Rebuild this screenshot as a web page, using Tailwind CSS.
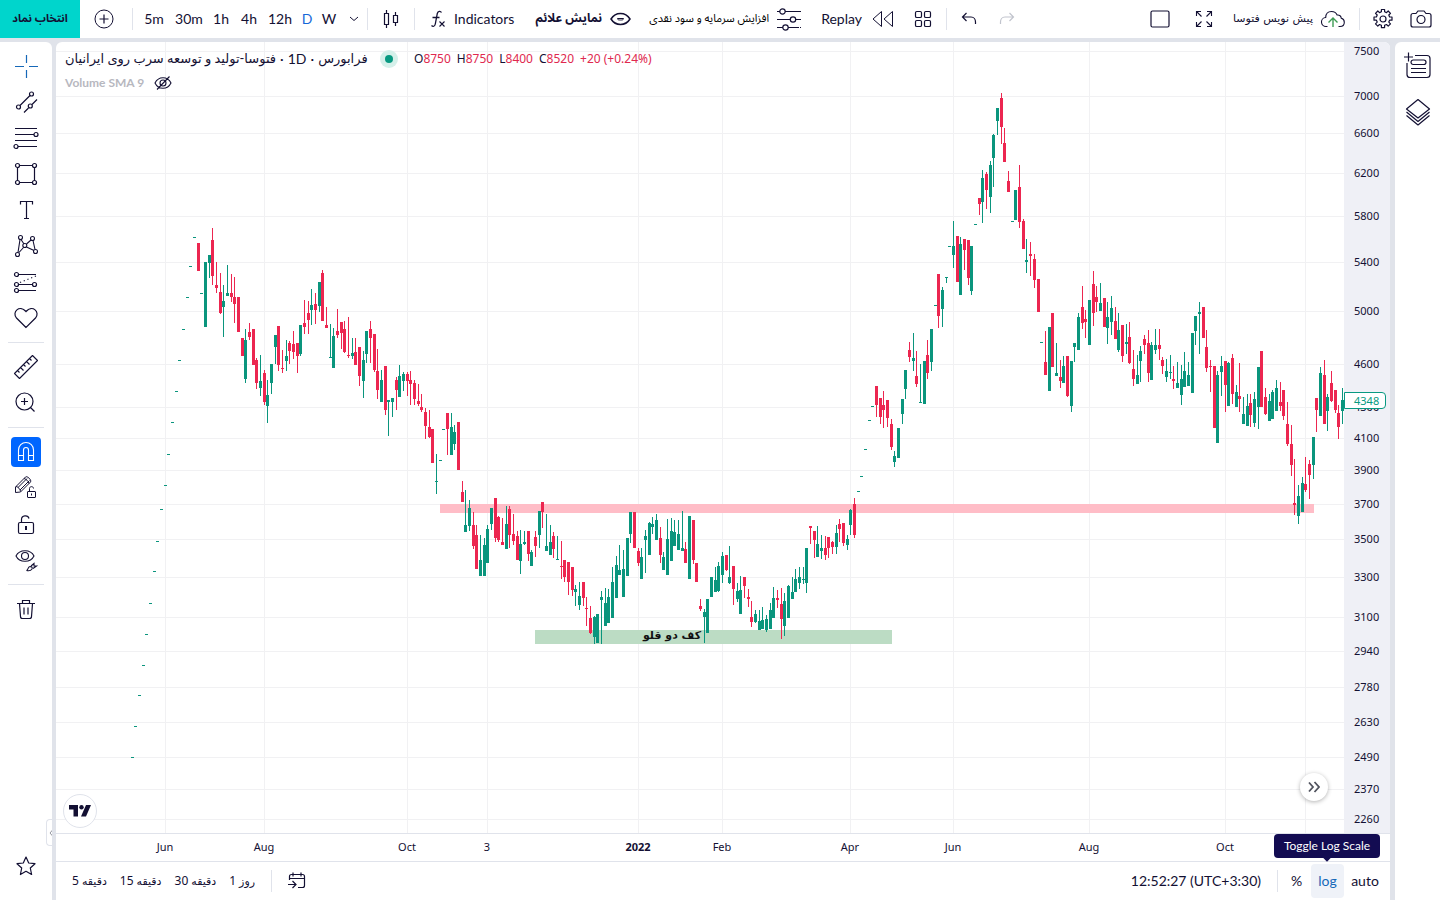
<!DOCTYPE html>
<html lang="en">
<head>
<meta charset="utf-8">
<meta name="viewport" content="width=device-width, initial-scale=1">
<title>Chart</title>
<script src="https://cdn.jsdelivr.net/npm/@tailwindcss/browser@4"></script>
</head>
<body class="h-screen min-h-[600px] overflow-hidden bg-[#e0e3ea] flex flex-col gap-1 text-[#131033] text-sm font-['Lato','DejaVu_Sans',sans-serif]">

<header class="h-[38px] shrink-0 bg-white flex items-center">
  <button class="w-20 h-full shrink-0 bg-[#00d5cc] text-[11px] font-bold font-['Noto_Sans_Arabic','DejaVu_Sans',sans-serif]" dir="rtl">انتخاب نماد</button>
  <button aria-label="Compare" class="w-[52px] shrink-0 flex justify-center pr-1"><svg width="20" height="20" viewBox="0 0 20 20" fill="none" stroke="currentColor"><circle cx="10" cy="10" r="9"/><path d="M5.500 10h9M10 5.500v9" stroke-width="1.200"/></svg></button>
  <div class="w-px h-[22px] bg-[#e0e3eb] shrink-0"></div>
  <nav class="flex shrink-0 items-center pl-1">
    <button class="w-[34px]">5m</button>
    <button class="w-9">30m</button>
    <button class="w-7">1h</button>
    <button class="w-7">4h</button>
    <button class="w-[34px]">12h</button>
    <button class="w-5 text-[#1668d8]">D</button>
    <button class="w-6">W</button>
    <button aria-label="More intervals" class="w-[26px] flex justify-center"><svg width="10" height="6" viewBox="0 0 10 6" fill="none" stroke="currentColor"><path d="M1 1l4 3.500L9 1"/></svg></button>
  </nav>
  <div class="w-px h-[22px] bg-[#e0e3eb] shrink-0"></div>
  <button aria-label="Chart type" class="w-[46px] shrink-0 flex justify-center"><svg width="16" height="20" viewBox="0 0 16 20" fill="none" stroke="currentColor" stroke-width="1.200"><path d="M1.500 4.500h4v11h-4zM3.500 1v3.500M3.500 15.500V19M10.500 6.500h4v7h-4zM12.500 3v3.500M12.500 13.500V17"/></svg></button>
  <div class="w-px h-[22px] bg-[#e0e3eb] shrink-0"></div>
  <button class="w-[108px] shrink-0 flex items-center gap-2 pl-4"><svg width="15" height="18" viewBox="0 0 15 18" fill="none" stroke="currentColor"><path d="M10.500 2.500C9.500.800 7 .800 6.300 3.500L4.300 14c-.500 2.500-2.300 3-3.800 1.500M1.500 7.500h7" stroke-width="1.300"/><path d="M8.500 11.500l5 5M13.500 11.500l-5 5" stroke-width="1.100"/></svg>Indicators</button>
  <button class="w-[108px] shrink-0 flex items-center justify-end gap-2 whitespace-nowrap"><span class="text-xs font-bold font-['Noto_Sans_Arabic','DejaVu_Sans',sans-serif]" dir="rtl">نمایش علائم</span><svg width="21" height="14" viewBox="0 0 21 14" fill="none" stroke="currentColor" stroke-width="1.500"><path d="M1 7c2.500-4 6-5.500 9.500-5.500S17.500 3 20 7c-2.500 4-6 5.500-9.500 5.500S3.500 11 1 7z"/><path d="M7.500 6.500h6c0 1.500-1.500 1.500-3 1.500s-3 0-3-1.500z" stroke-width="1"/></svg></button>
  <button class="w-[170px] shrink-0 flex items-center justify-end gap-2 whitespace-nowrap"><span class="text-[11px] font-['Noto_Sans_Arabic','DejaVu_Sans',sans-serif] text-black" dir="rtl">افزایش سرمایه و سود نقدی</span><svg width="24" height="24" viewBox="0 0 24 24" fill="none" stroke="currentColor" stroke-width="1.200"><path d="M0 4.500h3M8 4.500h16M0 12.500h13M18 12.500h6M0 20.500h6M11 20.500h11M23 20.500h1"/><circle cx="5.500" cy="4.500" r="2.700"/><circle cx="16" cy="12.500" r="2.700"/><circle cx="8.500" cy="20.500" r="2.700"/></svg></button>
  <button class="w-[93px] shrink-0 flex items-center justify-end gap-2.5">Replay<svg width="22" height="18" viewBox="0 0 22 18" fill="none" stroke="currentColor"><path d="M9.500 1.500v15L1 9zM20.500 1.500v15L12 9z"/></svg></button>
  <button aria-label="Layouts" class="w-[52px] pl-1.5 shrink-0 flex justify-center"><svg width="18" height="18" viewBox="0 0 18 18" fill="none" stroke="currentColor" stroke-width="1.200"><rect x="1.500" y="1.500" width="6" height="6" rx="1.300"/><rect x="10.500" y="1.500" width="6" height="6" rx="1.300"/><rect x="1.500" y="10.500" width="6" height="6" rx="1.300"/><rect x="10.500" y="10.500" width="6" height="6" rx="1.300"/></svg></button>
  <div class="w-px h-[22px] bg-[#e0e3eb] shrink-0"></div>
  <button aria-label="Undo" class="w-11 shrink-0 flex justify-center"><svg width="16" height="14" viewBox="0 0 16 14" fill="none" stroke="currentColor" stroke-width="1.200"><path d="M5.500 1l-4 4 4 4M1.500 5H10c3 0 4.500 2.500 4.500 5v2"/></svg></button>
  <button aria-label="Redo" disabled class="w-8 shrink-0 flex justify-center text-[#c1c4cd]"><svg width="16" height="14" viewBox="0 0 16 14" fill="none" stroke="currentColor" stroke-width="1.200"><path d="M10.500 1l4 4-4 4M14.500 5H6C3 5 1.500 7.500 1.500 10v2"/></svg></button>
  <div class="grow"></div>
  <button aria-label="Layout" class="w-11 shrink-0 flex justify-center"><svg width="20" height="18" viewBox="0 0 20 18" fill="none" stroke="currentColor" stroke-width="1.200"><rect x="1" y="1" width="18" height="16" rx="1.500"/></svg></button>
  <button aria-label="Fullscreen" class="w-11 shrink-0 flex justify-center"><svg width="18" height="18" viewBox="0 0 18 18" fill="none" stroke="currentColor" stroke-width="1.100"><path d="M1.500 6V1.500H6M1.500 1.500l5 5M12 1.500h4.500V6M16.500 1.500l-5 5M1.500 12v4.500H6M1.500 16.500l5-5M12 16.500h4.500V12M16.500 16.500l-5-5"/></svg></button>
  <button class="w-[119px] shrink-0 flex items-center justify-end gap-2 whitespace-nowrap"><span class="text-[11px] font-['DejaVu_Sans',sans-serif]" dir="rtl">پیش نویس فتوسا</span><svg width="24" height="18" viewBox="0 0 24 18" fill="none" stroke="currentColor"><path d="M6.500 16.500H5.300a4.500 4.500 0 0 1-.600-9C4.800 4 7 1.500 10.500 1.500c3 0 4.800 1.500 5.600 3.500 2.500-.300 4 1.200 4.200 3.200 2 .500 3 2.200 3 4 0 2.500-1.800 4.300-4.300 4.300h-1.500" stroke-width="1.100"/><path d="M12 17V8.500M7.500 12.500L12 8l4.500 4.500" stroke="#3f9c55" stroke-width="1.400"/></svg></button>
  <div class="ml-3.5 w-px h-[22px] bg-[#e0e3eb] shrink-0"></div>
  <button aria-label="Settings" class="w-[46px] shrink-0 flex justify-center"><svg width="22" height="22" viewBox="0 0 22 22" fill="none" stroke="currentColor" stroke-width="1.200"><circle cx="11" cy="11" r="3"/><path stroke-linejoin="round" d="M9.400 1.500h3.200v2.300l1.900.800 1.700-1.600 2.300 2.300-1.700 1.700.800 2h2.400v3.200h-2.400l-.800 1.900 1.700 1.700-2.300 2.300-1.700-1.600-1.900.800v2.300H9.400v-2.300l-1.900-.800-1.700 1.600-2.300-2.300 1.700-1.700-.800-1.900H2V9h2.400l.800-2-1.700-1.700L5.800 3l1.700 1.600 1.900-.800z"/></svg></button>
  <button aria-label="Snapshot" class="w-[34px] shrink-0 flex pl-1"><svg width="22" height="18" viewBox="0 0 22 18" fill="none" stroke="currentColor" stroke-width="1.200"><path d="M3 3.500h3L8 1h6l2 2.500h3c1.100 0 2 .900 2 2V15c0 1.100-.900 2-2 2H3c-1.100 0-2-.900-2-2V5.500c0-1.100.900-2 2-2z"/><circle cx="11" cy="9.500" r="4"/></svg></button>
</header>

<div class="grow min-h-0 flex">
  <aside class="w-[52px] shrink-0 bg-white rounded-tr-md flex flex-col items-center pt-1.5 relative">
    <button aria-label="Cross" class="size-9 flex items-center justify-center text-[#1668b8]"><svg width="28" height="28" viewBox="0 0 28 28" fill="none" stroke="currentColor" stroke-width="1.200"><path d="M3 14.500h9M17 14.500h9M14.500 3v8M14.500 18v8"/></svg></button>
    <button aria-label="Trend line" class="size-9 flex items-center justify-center"><svg width="28" height="28" viewBox="0 0 28 28" fill="none" stroke="currentColor" stroke-width="1.200"><circle cx="6.500" cy="19" r="2"/><circle cx="19.500" cy="6" r="2"/><path d="M8 17.500L18 7.500M12 24.500l4.500-4.500M20 16.500l5-5"/><circle cx="18.300" cy="18" r="2"/></svg></button>
    <button aria-label="Fib retracement" class="size-9 flex items-center justify-center"><svg width="28" height="28" viewBox="0 0 28 28" fill="none" stroke="currentColor" stroke-width="1.200"><path d="M3 4.500h22M3 10.500h19M3 16.500h22M6 22.500h19"/><circle cx="24" cy="10.500" r="2"/><circle cx="4" cy="22.500" r="2"/></svg></button>
    <button aria-label="Rectangle" class="size-9 flex items-center justify-center"><svg width="28" height="28" viewBox="0 0 28 28" fill="none" stroke="currentColor" stroke-width="1.200"><path d="M7.500 5.500h13M7.500 22.500h13M5.500 7.500v13M22.500 7.500v13"/><circle cx="5.500" cy="5.500" r="2"/><circle cx="22.500" cy="5.500" r="2"/><circle cx="5.500" cy="22.500" r="2"/><circle cx="22.500" cy="22.500" r="2"/></svg></button>
    <button aria-label="Text" class="size-9 flex items-center justify-center"><svg width="28" height="28" viewBox="0 0 28 28" fill="none" stroke="currentColor" stroke-width="1.200"><path d="M8.500 8.500v-3h12v3M14.500 5.500v17M12 22.500h5"/></svg></button>
    <button aria-label="Patterns" class="size-9 flex items-center justify-center"><svg width="28" height="28" viewBox="0 0 28 28" fill="none" stroke="currentColor" stroke-width="1.100"><path d="M8 7.500l-2 13M9 7.500l3 4.500M7 20.500l4.500-5M14.500 12l4.500-4M21 8.500l2 9M14.500 15l7.500 3.500"/><g fill="white"><circle cx="8.500" cy="5.500" r="2"/><circle cx="20.500" cy="6.500" r="2"/><circle cx="12.800" cy="13.500" r="2"/><circle cx="5.500" cy="22.500" r="2"/><circle cx="23.500" cy="19.500" r="2"/></g></svg></button>
    <button aria-label="Forecast" class="size-9 flex items-center justify-center"><svg width="28" height="28" viewBox="0 0 28 28" fill="none" stroke="currentColor" stroke-width="1.200"><path d="M6 6.500h18M6 16.500h14.500M6 22.500h18"/><path d="M8 14.500L24 8" stroke-dasharray="1.200 2.800"/><circle cx="4.500" cy="6.500" r="2"/><circle cx="4.500" cy="16.500" r="2"/><circle cx="22.500" cy="16.500" r="2"/><circle cx="4.500" cy="22.500" r="2"/></svg></button>
    <button aria-label="Icons" class="size-9 flex items-center justify-center"><svg width="28" height="28" viewBox="0 0 28 28" fill="none" stroke="currentColor" stroke-width="1.200"><path d="M14 23.500L4.500 14c-5-6 3-13.500 9.500-6.500 6.500-7 14.500.500 9.500 6.500z"/></svg></button>
    <div class="mt-1.5 mb-1.5 h-px w-9 bg-[#e0e3eb]"></div>
    <button aria-label="Measure" class="size-9 flex items-center justify-center"><svg width="28" height="28" viewBox="0 0 28 28" fill="none" stroke="currentColor" stroke-width="1.100"><path stroke-linejoin="round" d="M2.500 20.500l18-18 5 5-18 18zM5.500 17.500l2 2M8.500 14.500l3 3M11.500 11.500l2 2M14.500 8.500l3 3M17.500 5.500l2 2"/></svg></button>
    <button aria-label="Zoom in" class="size-9 flex items-center justify-center"><svg width="28" height="28" viewBox="0 0 28 28" fill="none" stroke="currentColor" stroke-width="1.200"><circle cx="12.500" cy="12.500" r="8.500"/><path d="M18.500 18.500l4 4M9 12.500h7M12.500 9v7"/></svg></button>
    <div class="mt-1.5 mb-1.5 h-px w-9 bg-[#e0e3eb]"></div>
    <button aria-label="Magnet" class="size-9 flex items-center justify-center"><span class="size-[30px] rounded bg-[#0066ff] text-white flex items-center justify-center"><svg width="28" height="28" viewBox="0 0 28 28" fill="none" stroke="currentColor" stroke-width="1.100"><path d="M6.500 22.500V12a7.500 7.500 0 0 1 15 0v10.500h-5V12a2.500 2.500 0 0 0-5 0v10.500zM6.500 17.500h5M16.500 17.500h5"/></svg></span></button>
    <button aria-label="Stay in drawing mode" class="size-9 flex items-center justify-center"><svg width="28" height="28" viewBox="0 0 28 28" fill="none" stroke="currentColor"><path stroke-linejoin="round" d="M3.500 13l10-10c1.500-1.500 6.500 3 5 5l-10 10-5 .500zM4 12.500c2 0 4.500 3 4.500 5M6 13.500l9-9M8 16l9.500-9.500M12 4.500c2 .500 4.500 2.500 5 5"/><rect x="15.500" y="17.500" width="8" height="6" rx=".500"/><path d="M17.500 17.500v-3c0-2.500 4-2.500 4 0M19.500 19.500v2"/></svg></button>
    <button aria-label="Lock drawings" class="size-9 flex items-center justify-center"><svg width="28" height="28" viewBox="0 0 28 28" fill="none" stroke="currentColor" stroke-width="1.200"><rect x="6.500" y="12.500" width="15" height="11" rx="1.500"/><path d="M9.500 12.500V9.500c0-4.500 6.500-5 7.500-1"/><path d="M14 16v4" stroke-width="2"/></svg></button>
    <button aria-label="Hide drawings" class="size-9 flex items-center justify-center"><svg width="28" height="28" viewBox="0 0 28 28" fill="none" stroke="currentColor" stroke-width="1.100"><path d="M4 10C7.500 3 18.500 3 22 10 18.500 17 7.500 17 4 10z"/><circle cx="13" cy="10" r="3.500"/><path d="M14.500 24.500c2-.500 1-3.500 3.500-4 2 0 2.500 1 2 2.500-1 1.500-3.500 2-5.500 1.500zM19 20l3-2.500v2.500h2.500L21 22.500"/></svg></button>
    <div class="mt-1.5 mb-1.5 h-px w-9 bg-[#e0e3eb]"></div>
    <button aria-label="Remove" class="size-9 flex items-center justify-center"><svg width="28" height="28" viewBox="0 0 28 28" fill="none" stroke="currentColor" stroke-width="1.200"><path d="M5 8.500h18M10.500 8.500v-3h7v3M7.500 8.500l1 13c0 1 .500 2 2 2h7c1.500 0 2-1 2-2l1-13M12 12.500v7M16 12.500v7"/></svg></button>
    <button aria-label="Favorites" class="mt-auto mb-4 size-9 flex items-center justify-center"><svg width="20" height="20" viewBox="0 0 20 20" fill="none" stroke="currentColor" stroke-width="1.200" stroke-linejoin="round"><path d="M10 1l2.700 6 6.300.700-4.700 4.300 1.300 6.500L10 15.300 4.400 18.500 5.700 12 1 7.700 7.300 7z"/></svg></button>
    <button aria-label="Hide toolbar" class="absolute right-0 bottom-[54px] w-1.5 h-[27px] overflow-hidden rounded-l border border-r-0 border-[#e0e3eb] flex items-center pl-0.5 text-[#9598a1]"><svg class="shrink-0" width="6" height="8" viewBox="0 0 6 8" fill="none" stroke="currentColor"><path d="M4 .500L1 4l3 3.500"/></svg></button>
  </aside>

  <main class="grow min-w-0 ml-1 mr-[5px] bg-white rounded-t-md overflow-hidden flex flex-col">
    <div class="grow min-h-0 flex">
      <div class="grow min-w-0 relative">
        <svg id="plot" class="absolute inset-0 size-full" viewBox="56 42 1288 791" preserveAspectRatio="none" shape-rendering="crispEdges" role="img" aria-label="Daily candles"></svg>
        <div class="absolute left-[9px] top-2 flex flex-col">
          <div class="flex items-center h-[18px] whitespace-nowrap">
            <h1 class="flex gap-1 text-sm w-[310px]"><bdi class="text-[13px]">فتوسا-تولید و توسعه سرب روی ایرانیان</bdi><span>·</span><span>1D</span><span>·</span><bdi class="text-[13px]">فرابورس</bdi></h1>
            <span class="ml-[5px] size-[18px] rounded-full bg-[#d5f0ea] flex items-center justify-center"><span class="size-2 rounded-full bg-[#089981]"></span></span>
            <p class="ml-4 flex gap-1.5 text-xs font-['Noto_Sans',sans-serif] text-[#e0294f]"><span><span class="text-[#131033]">O</span>8750</span><span><span class="text-[#131033]">H</span>8750</span><span><span class="text-[#131033]">L</span>8400</span><span><span class="text-[#131033]">C</span>8520</span><span>+20 (+0.24%)</span></p>
          </div>
          <div class="mt-1.5 flex items-center h-[18px] gap-2.5 text-xs font-bold text-[#b7b8bf]">Volume SMA 9
            <button aria-label="Show indicator" class="text-[#131033]"><svg width="18" height="14" viewBox="0 0 18 14" fill="none" stroke="currentColor" stroke-width="1.100"><path d="M1 7c3.500-7 12.500-7 16 0-3.500 7-12.500 7-16 0zM3 13.500L15.500.500"/><circle cx="9" cy="7" r="3"/></svg></button>
          </div>
        </div>
        <a href="#" aria-label="TradingView" class="absolute left-[7px] bottom-[5px] size-[34px] rounded-full border border-[#e0e3eb] bg-white flex items-center justify-center"><svg width="22" height="12" viewBox="0 0 22 12" fill="#131033"><path d="M0 0h9v11.500H4.500V4.500H0zM17 0h5l-5 11.500h-5z"/><circle cx="12.500" cy="2.300" r="2.200"/></svg></a>
        <button aria-label="Scroll to latest" class="absolute right-4 bottom-8 size-7 rounded-full bg-white shadow-[0_1px_4px_rgba(0,0,0,0.3)] flex items-center justify-center text-[#50535e]"><svg width="12" height="12" viewBox="0 0 12 12" fill="none" stroke="currentColor" stroke-width="1.800"><path d="M1 1.500L5 6l-4 4.500M6.500 1L11 6l-4.500 5"/></svg></button>
      </div>
      <div id="prices" class="w-[46px] shrink-0 relative bg-[#eff0f6] text-[11px] font-['Noto_Sans',sans-serif]">
        <div class="absolute left-0 top-[350px] z-10 w-[42px] h-[17px] bg-white border border-[#089981] rounded-r-sm text-[#089981] leading-4 pl-[9px]">4348</div>
      </div>
    </div>
    <div class="h-7 shrink-0 flex border-t border-[#e0e3eb]">
      <div id="dates" class="grow relative text-[11px] font-['Noto_Sans',sans-serif]"></div>
      <div class="w-[46px]"></div>
    </div>
    <footer class="h-[39px] shrink-0 border-t border-[#e0e3eb] flex items-center relative">
      <div class="flex items-center pl-4 gap-[13px] text-xs font-['Noto_Sans','DejaVu_Sans',sans-serif] whitespace-nowrap">
        <button class="flex items-center gap-[3px]">5<bdi class="text-[11px]">دقیقه</bdi></button>
        <button class="flex items-center gap-[3px]">15<bdi class="text-[11px]">دقیقه</bdi></button>
        <button class="flex items-center gap-[3px]">30<bdi class="text-[11px]">دقیقه</bdi></button>
        <button class="flex items-center gap-[3px]">1<bdi class="text-[11px]">روز</bdi></button>
      </div>
      <div class="ml-4 w-px h-[22px] bg-[#e0e3eb]"></div>
      <button aria-label="Go to date" class="ml-4"><svg width="18" height="18" viewBox="0 0 18 18" fill="none" stroke="currentColor" stroke-width="1.200"><path d="M1.500 8V4.500c0-1 .500-2 2-2h11c1.500 0 2 1 2 2v9c0 1-.500 2-2 2H10M1.500 6.500h15M5 .500v4M13 .500v4M0 12.500h7.500M4.500 9l3.500 3.500L4.500 16"/></svg></button>
      <div class="grow"></div>
      <button class="text-sm">12:52:27 (UTC+3:30)</button>
      <div class="ml-4 w-px h-[22px] bg-[#e0e3eb]"></div>
      <button class="w-[33px] pl-1">%</button>
      <button class="relative w-[33px] h-[34px] rounded bg-[#eff2f8] text-[#1668b8]">log
        <span role="tooltip" class="absolute right-[-36px] bottom-10 w-[106px] h-6 rounded-sm bg-[#130c52] text-white text-xs leading-6 text-center whitespace-nowrap">Toggle Log Scale<span class="absolute left-[49px] top-[18px] size-2 rotate-45 bg-[#130c52]"></span></span>
      </button>
      <button class="w-[46px] text-center pl-0.5 pr-1.5">auto</button>
    </footer>
  </main>

  <aside class="w-[45px] shrink-0 bg-white rounded-tl-md flex flex-col items-center pt-2.5 gap-4">
    <button aria-label="Watchlist" class="h-7"><svg width="28" height="28" viewBox="0 0 28 28" fill="none" stroke="currentColor" stroke-width="1.200"><path d="M0 5h9M4.500 .500v9M11 3.500h12c2 0 3 1 3 3v16c0 2-1 3-3 3H6c-2 0-3-1-3-3V11M7 16.500h15M7 20.500h15"/><rect x="7" y="8" width="15" height="4.500" rx="2.200"/></svg></button>
    <button aria-label="Object tree" class="h-8"><svg width="26" height="28" viewBox="0 0 26 28" fill="none" stroke="currentColor" stroke-width="1.200" stroke-linejoin="round"><path d="M1.500 11L13 1.500 24.500 11 13 20zM1.500 14L13 23.500l11.500-9.500M1.500 17.500L13 27l11.500-9.500"/></svg></button>
  </aside>
</div>

<script>
const UP = '#0a957d', DOWN = '#ec2650';
const priceTicks = [[7500,51],[7000,96],[6600,133],[6200,173],[5800,216],[5400,262],[5000,311],[4600,364],[4300,407],[4100,438],[3900,470],[3700,504],[3500,539],[3300,577],[3100,617],[2940,651],[2780,687],[2630,722],[2490,757],[2370,789],[2260,819]];
const dateTicks = [['Jun',165],['Aug',264],['Oct',407],['3',487],['2022',638],['Feb',722],['Apr',850],['Jun',953],['Aug',1089],['Oct',1225],['',1305]];

// Candles in blocks: origin x, origin y, then "colour x high top bottom low" in thirds of a unit; "-x y" is a flat day.
const blocks = [
[0,0,`-397 2271;-406 2178;-418 2085;-430 1995;-439 1902;-451 1809;-463 1713;-472 1623;-484 1527;-496 1455`],
[120,220,`-223 51;-211 138;-244 219;-202 231;-190 327;-178 420;-169 513;-157 606;-145 702;r235 69 69 153 153;g256 126 126 321 321;g268 105 105 129 174;r277 24 60 168 195;r289 126 195 204 219;r301 159 216 279 282;g310 195 243 261 351;g322 135 219 228 228;r334 162 219 231 246;r343 171 231 252 309;r355 231 231 336 336;r367 354 354 408 408;g376 327 360 477 489;r388 309 336 351 360;r400 327 327 435 435;r409 414 420 489 507;g421 405 483 504 528;r433 450 459 546 555;g442 480 525 558 609;g454 432 432 489 522;g466 345 345 381 432;r475 318 318 435 453;r487 390 444 447 459;g499 360 408 423 453;r508 363 369 393 432;r520 333 372 396 417;r532 369 369 408 459;g541 315 315 402 408;r553 240 309 321 342;r565 243 279 300 342;g574 207 255 270 315;r586 219 252 270 312;g598 186 186 258 276;r607 150 159 303 303;r619 261 315 324 324;g631 312 411 414 414;g640 324 348 444 444;r652 267 333 345 354;r664 306 306 339 387;r673 303 327 396 399;r685 291 405 408 414;g697 354 399 408 417;r706 354 396 435 435;r718 381 381 468 498;g730 393 420 483 534;g739 333 333 402 429;r751 303 327 354 429;r763 342 342 450 456;r772 387 453 510 537;g784 450 480 546 546;r796 438 438 570 585;g805 540 540 546 648;g817 534 534 546 591;r829 471 480 510 570;g838 435 468 531 531;g850 456 462 483 513;r862 456 462 483 528;r871 453 480 492 555;r883 480 489 537 555;r895 492 543 552 558;r904 522 561 570 576;r916 564 576 618 657;r928 570 621 651 654;r937 627 627 729 729`],
[420,400,`g49 162 243 246 282;-61 180;-70 87;r82 39 39 87 165;g94 39 81 165 165;g103 75 96 132 150;r115 66 66 210 210;r127 243 276 306 306;g136 270 375 396 396;g148 300 324 378 393;r160 336 375 438 447;r169 375 405 507 507;g181 405 480 528 528;g193 414 435 528 528;g202 375 387 489 489;g214 324 324 372 390;r226 294 294 414 426;r235 348 351 420 426;r247 354 426 435 435;g259 318 372 447 447;r268 318 327 405 444;r280 342 402 423 435;r292 393 408 480 480;g301 390 432 483 522;g313 393 426 432 435;r325 393 393 462 483;g334 450 456 498 498;r346 393 411 438 471;g358 333 333 405 444;r367 306 306 336 384;g379 342 438 453 453;g391 375 426 465 465;r400 396 408 447 474;g412 408 477 480 480;r424 423 498 501 537;r433 480 480 531 546;r445 486 486 546 585;r457 501 501 570 588;g466 555 567 576 618;g478 546 588 615 630;r490 546 546 594 618;r499 591 624 627 678;r511 618 654 699 702;g523 648 651 711 732;g532 642 642 729 729;g544 573 591 600 732;g556 564 609 678 678;g565 567 591 669 669;g577 501 546 654 654;g589 468 495 594 594;g598 435 510 525 525;g610 450 507 591 591;g622 414 414 528 528;g631 336 336 402 429;r643 336 336 444 444;r655 444 453 489 498;g664 444 471 537 537;g676 390 408 420 519;g688 366 369 465 465;g697 351 372 381 402;g709 342 360 420 420;r721 381 414 465 489;g730 456 471 510 510;g742 357 417 525 525;g754 354 393 483 483;g763 360 396 438 438;g775 360 402 450 450;g787 333 444 453 453;r796 426 447 489 489;g808 348 348 537 537;r820 360 360 480 492;r829 489 489 546 546`],
[690,380,`r31 657 678 687 693;g43 687 696 711 789;g52 657 657 759 759;g64 591 591 651 651;g76 561 600 636 636;g85 546 558 633 636;g97 516 528 585 609;r109 525 525 570 573;g118 498 591 609 612;r130 558 558 627 675;g142 609 633 657 666;g151 588 630 702 702;r163 591 591 618 654;r175 627 651 657 681;r184 663 711 726 741;g196 690 702 726 729;g208 690 723 750 750;g217 681 720 747 747;g229 705 717 750 756;g241 669 690 747 747;g250 621 654 714 714;r262 630 654 660 684;r274 624 672 717 777;g283 639 663 738 768;g295 615 618 714 714;g307 591 636 657 657;g316 567 597 636 636;g328 561 591 609 627;g340 561 597 600 612;g349 504 504 609 639;r361 438 438 444 492;r373 453 453 480 534;g382 438 492 531 531;g394 465 504 513 537;r406 468 504 525 540;r415 471 471 504 534;r427 483 486 501 522;g439 435 459 501 522;r448 417 432 447 486;r460 429 429 489 498;g472 465 477 495 510;g481 387 390 435 465;r493 354 372 465 474;-505 333;-514 288;-526 207;-538 120;-547 78`],
[860,80,`r49 918 918 975 1011;r61 954 954 1011 1032;r70 933 975 990 1044;r82 960 960 1014 1041;r94 1017 1032 1101 1110;g103 1113 1128 1146 1161;g115 1044 1044 1134 1134;g127 957 957 1002 1032;g136 870 870 927 957;r148 786 810 831 846;g160 759 834 843 873;r169 813 888 912 921;g181 852 966 969 969;g193 843 843 972 972;r202 780 825 879 897;g214 747 747 846 873;-226 675;r235 582 582 708 744;g247 621 630 687 741;g259 591 591 594 609;-268 498;g280 423 498 525 564;r292 468 468 606 606;g301 471 492 645 645;r313 477 477 510 570;r325 480 480 594 615;g334 498 498 633 645;-346 432;r358 354 354 372 405;g367 270 294 366 429;r379 276 282 330 387;g391 243 255 351 399;g400 162 165 234 321;g412 84 84 123 165;r424 39 54 141 192;r433 144 189 246 246;r445 273 303 336 336;-457 423;g466 330 330 420 420;r478 255 321 426 444;r490 417 423 507 507;g499 477 540 546 579;r511 486 522 528 588;r523 522 537 600 624;r535 597 597 696 696;-544 786;r556 753 846 885 885;g568 741 741 933 933;r577 699 699 861 861;g589 789 879 888 888;r601 840 891 903 924;g610 828 858 909 909;r622 828 828 948 951;g634 843 843 978 996;g643 789 789 801 846;g655 699 711 810 810;r667 618 681 729 747;r676 690 717 726 774;g688 660 660 795 795;r700 573 612 699 738;r709 618 651 666 696;g721 609 669 693 693`],
[1080,260,`r73 114 114 201 201;g82 126 171 204 252;g94 108 144 186 225;r106 141 183 237 237;g115 159 210 270 276;r127 195 195 288 306;g139 192 246 252 282;r148 186 231 309 312;r160 270 327 357 378;g172 285 345 372 372;g181 258 273 303 366;r193 225 237 255 282;r205 210 249 339 366;g214 246 255 360 360;g226 207 255 270 282;r238 207 255 267 300;r247 291 300 318 342;g259 297 333 351 366;g271 285 336 339 357;r280 318 357 363 387;g292 306 369 384 384;g304 315 357 405 435;g313 276 333 381 381;g325 306 345 378 378;g337 219 219 399 399;g346 168 168 213 255;g358 126 156 162 282;r370 141 141 234 234;r379 210 261 324 336;r391 300 318 321 396;r403 318 318 504 504;g412 333 345 549 549;g424 288 318 336 408;r436 303 303 375 456;g445 306 309 438 438;r457 282 294 402 432;g469 375 396 441 441;r478 309 408 417 456;g490 411 462 492 492;g502 402 438 498 498;r511 402 429 465 501;g523 396 417 489 501;g535 321 321 441 507;r544 273 273 441 441;r556 384 411 462 465;g568 402 423 483 483;g577 390 396 477 477;g589 360 384 453 453;r601 366 426 438 453;r610 390 390 468 480;r622 426 492 552 558;r634 495 552 615 648;r643 597 729 735 765;g655 675 708 768 792;g667 651 669 756 756;r676 591 672 690 696;r688 600 612 645 717;g700 531 531 615 657;r709 414 414 450 516;g721 321 339 468 468;r733 300 345 492 492;g742 402 411 453 513;r754 333 369 423 426;r766 390 390 450 459;r775 435 459 501 537;g787 384 420 453 492`]
];

const rect = (x, y, w, h, fill) => `<rect x="${x}" y="${y}" width="${w}" height="${h}" fill="${fill}"/>`;
let out = '';
for (const [, y] of priceTicks) out += rect(56, y, 1288, 1, '#f1f1f3');
for (const [, x] of dateTicks) out += rect(x, 42, 1, 791, '#f1f1f3');
out += rect(440, 504, 874, 9, '#ffbdc7') + rect(535, 630, 357, 14, '#bcdcc4');
for (const [ox, oy, rows] of blocks) {
  for (const row of rows.split(';')) {
    const v = row.slice(1).split(' ').map(n => Number(n) / 3);
    const x = ox + Math.floor(v[0]);
    if (row[0] === '-') { out += rect(x - 1, oy + Math.round(v[1]), 3, 1, UP); continue; }
    const [hi, top, bot, lo] = v.slice(1).map(n => oy + Math.round(n));
    const fill = row[0] === 'g' ? UP : DOWN;
    out += rect(x, hi, 1, lo - hi, fill) + rect(x - 1, top, 3, Math.max(1, bot - top), fill);
  }
}
out += '<text x="672" y="639" text-anchor="middle" direction="rtl" font-size="11" font-weight="bold" font-family="DejaVu Sans, sans-serif" fill="#111">کف دو قلو</text>';
document.getElementById('plot').innerHTML = out;

document.getElementById('prices').insertAdjacentHTML('beforeend', priceTicks.map(([p, y]) =>
  `<span class="absolute left-[10px] -translate-y-1/2" style="top:${(y - 42) / 791 * 100}%">${p}</span>`).join(''));
document.getElementById('dates').innerHTML = dateTicks.map(([d, x]) =>
  `<span class="absolute top-[5px] -translate-x-1/2 ${d === '2022' ? 'font-bold' : ''}" style="left:${(x - 56) / 1288 * 100}%">${d}</span>`).join('');
</script>
</body>
</html>
